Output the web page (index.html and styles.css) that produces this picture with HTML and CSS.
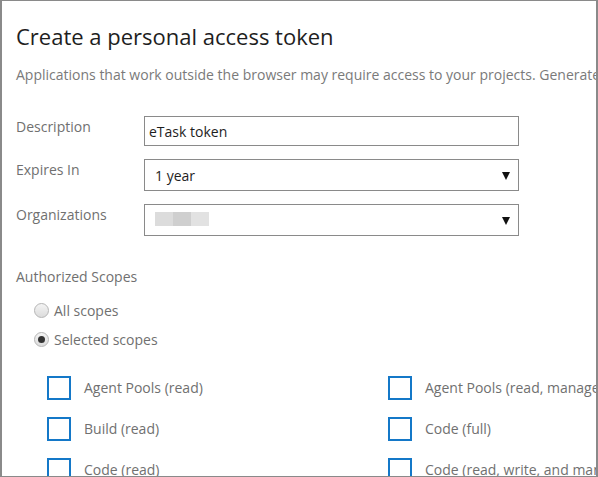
FILE: index.html
```html
<!DOCTYPE html>
<html>
<head>
<meta charset="utf-8">
<link rel="stylesheet" href="styles.css">
</head>
<body>
<div class="frame">
  <h1 class="title">Create a personal access token</h1>
  <p class="intro">Applications that work outside the browser may require access to your projects. Generate a token to use for these applications.</p>

  <div class="form">
    <div class="row">
      <label class="label">Description</label>
      <div class="field input">eTask token</div>
    </div>
    <div class="row">
      <label class="label">Expires In</label>
      <div class="field select"><span class="sel-text">1 year</span><span class="arrow"></span></div>
    </div>
    <div class="row">
      <label class="label">Organizations</label>
      <div class="field select"><span class="blur"><i class="b1"></i><i class="b2"></i><i class="b3"></i></span><span class="arrow"></span></div>
    </div>
  </div>

  <div class="scopes">
    <div class="scopes-title">Authorized Scopes</div>
    <div class="radios">
      <div class="radio-row"><span class="radio"></span><span>All scopes</span></div>
      <div class="radio-row"><span class="radio checked"></span><span>Selected scopes</span></div>
    </div>
    <div class="grid">
      <div class="check-row"><span class="box"></span><span>Agent Pools (read)</span></div>
      <div class="check-row"><span class="box"></span><span>Agent Pools (read, manage)</span></div>
      <div class="check-row"><span class="box"></span><span>Build (read)</span></div>
      <div class="check-row"><span class="box"></span><span>Code (full)</span></div>
      <div class="check-row"><span class="box"></span><span>Code (read)</span></div>
      <div class="check-row"><span class="box"></span><span>Code (read, write, and manage)</span></div>
    </div>
  </div>
</div>
</body>
</html>
```

FILE: styles.css
```css
html, body {
  margin: 0;
  padding: 0;
  background: #fff;
  overflow: hidden;
}
body {
  width: 598px;
  height: 477px;
  font-family: "Open Sans", "Noto Sans", sans-serif;
}
.frame {
  box-sizing: border-box;
  width: 598px;
  height: 477px;
  border: 1px solid #8a8a8a;
  border-left-width: 2px;
  border-right-width: 2px;
  padding: 0 0 0 14px;
  overflow: hidden;
  white-space: nowrap;
}
.title {
  margin: 20px 0 0 0;
  font-size: 22px;
  font-weight: 400;
  color: #1e1e1e;
  line-height: 30px;
}
.intro {
  margin: 14px 0 0 0;
  font-size: 14px;
  color: #7a7a7a;
  line-height: 20px;
}
.form {
  margin-top: 31px;
  display: flex;
  flex-direction: column;
  gap: 13px;
}
.row {
  display: flex;
  align-items: flex-start;
}
.label {
  width: 128px;
  font-size: 14px;
  color: #707070;
  line-height: 20px;
  margin-top: 1px;
}
.field {
  box-sizing: border-box;
  width: 375px;
  height: 30px;
  border: 1px solid #8a8a8a;
  display: flex;
  align-items: center;
  font-size: 14px;
  color: #1e1e1e;
}
.input { padding-left: 4px; }
.select { height: 32px; padding-left: 10px; padding-right: 8px; }
.sel-text { flex: 1; }
.arrow {
  margin-left: auto;
  width: 0;
  height: 0;
  border-left: 4px solid transparent;
  border-right: 4px solid transparent;
  border-top: 8px solid #111;
  margin-top: 1px;
}
.blur { display: flex; height: 14px; margin-top: -2px; }
.blur i { display: block; width: 18px; height: 14px; }
.b1 { background: #dcdcdc; }
.b2 { background: #cfcfcf; }
.b3 { background: #e2e2e2; }

.scopes { margin-top: 31px; }
.scopes-title {
  font-size: 14px;
  color: #707070;
  line-height: 20px;
}
.radios {
  margin-top: 14px;
  padding-left: 18px;
  display: flex;
  flex-direction: column;
  gap: 9px;
}
.radio-row {
  display: flex;
  align-items: center;
  gap: 5px;
  font-size: 14px;
  color: #707070;
  line-height: 20px;
}
.radio {
  box-sizing: border-box;
  width: 15px;
  height: 15px;
  border-radius: 50%;
  border: 1px solid #b5b5b5;
  background: linear-gradient(#f4f4f4, #dcdcdc);
  display: flex;
  align-items: center;
  justify-content: center;
  margin-top: -2px;
}
.radio.checked::after {
  content: "";
  width: 7px;
  height: 7px;
  border-radius: 50%;
  background: #333;
}
.grid {
  margin-top: 26px;
  padding-left: 31px;
  display: grid;
  grid-template-columns: 341px 300px;
  row-gap: 17px;
}
.check-row {
  display: flex;
  align-items: center;
  font-size: 14px;
  color: #707070;
  line-height: 24px;
}
.box {
  box-sizing: border-box;
  width: 24px;
  height: 24px;
  border: 2px solid #1478c8;
  margin-right: 13px;
  flex: none;
}
```
